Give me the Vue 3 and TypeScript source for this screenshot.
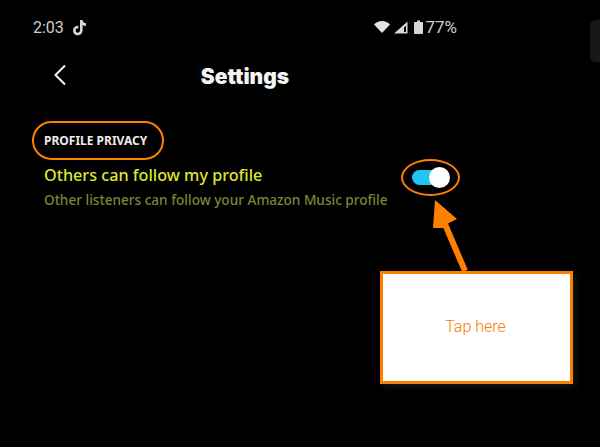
<script setup lang="ts">
const title = 'Settings'
</script>

<template>
  <div class="screen">
    <div class="status">
      <div class="status-left">
        <span>2:03</span>
        <svg class="tiktok" width="15" height="17" viewBox="0 0 15 17">
          <path d="M8 1h2.600c.2 1.900 1.400 3.100 3.400 3.300v2.600c-1.300 0-2.500-.4-3.400-1v5.400c0 3-2.200 5-4.900 5S1 14.300 1 11.500s2.300-5 5.400-4.800v2.700c-1.500-.3-2.800.7-2.800 2.100 0 1.300 1 2.200 2.200 2.200S8 12.800 8 11.300z" fill="#d6d6d6"/>
        </svg>
      </div>
      <div class="status-right">
        <svg width="16" height="12" viewBox="0 0 16 12"><path d="M0 3.500C2 1.300 5 0 8 0s6 1.300 8 3.500L8 12z" fill="#e2e2e2"/></svg>
        <svg class="signal" width="14" height="13" viewBox="0 0 14 13"><path d="M0 12.500 13.500.5v12zM10 6.500v4.500h2V4.800z" fill="#d6d6d6" fill-rule="evenodd"/></svg>
        <svg class="battery" width="9" height="14" viewBox="0 0 9 14"><path d="M1 2h2V.5h3V2h2q1 0 1 1v10q0 1-1 1H1q-1 0-1-1V3q0-1 1-1z" fill="#d6d6d6"/></svg>
        <span class="pct">77%</span>
      </div>
    </div>

    <header class="nav">
      <svg class="back" width="14" height="22" viewBox="0 0 14 22"><path d="M12 1.500 2.500 11l9.500 9.500" fill="none" stroke="#f2f2f2" stroke-width="2"/></svg>
      <h1>{{ title }}</h1>
    </header>

    <section class="privacy">
      <h2>PROFILE PRIVACY</h2>
      <div class="row">
        <div class="labels">
          <div class="name">Others can follow my profile</div>
          <div class="desc">Other listeners can follow your Amazon Music profile</div>
        </div>
        <div class="switch"><span class="knob"></span></div>
      </div>
    </section>

    <!-- overlays: edge tab and annotations drawn over the screenshot -->
    <span class="edge-tab"></span>
    <span class="ring ring-title"></span>
    <span class="ring ring-switch"></span>
    <svg class="arrow" width="60" height="72" viewBox="0 0 60 72">
      <path d="M44 72 23.500 24" fill="none" stroke="#ff8000" stroke-width="6"/>
      <path d="M14 1 36 20 26 25 22 29 12 29z" fill="#ff8000"/>
    </svg>
    <div class="callout">Tap here</div>
  </div>
</template>

<style>
html, body { margin: 0; background: #000; }
</style>

<style scoped>
.screen {
  position: relative;
  width: 600px;
  height: 447px;
  overflow: hidden;
  background: #000;
  font-family: "Noto Sans", sans-serif;
}
.status {
  display: flex;
  justify-content: space-between;
  align-items: center;
  height: 20px;
  padding: 17px 143px 0 33px;
  color: #d0d0d0;
  font-family: Roboto, sans-serif;
  font-size: 16px;
}
.status-left, .status-right { display: flex; align-items: center; }
.tiktok { margin-left: 8px; }
.signal { margin-left: 4px; }
.battery { margin-left: 6px; }
.pct { margin-left: 2px; font-size: 17px; }
.nav {
  position: relative;
  display: flex;
  justify-content: center;
  align-items: center;
  height: 30px;
  margin-top: 24px;
  padding-right: 110px;
}
.back { position: absolute; left: 53px; top: 3px; }
h1 {
  margin: 0;
  color: #f4f4f4;
  font-family: Inter, sans-serif;
  font-size: 21px;
  font-weight: 900;
}
.privacy { padding: 40px 0 0 44px; }
h2 {
  margin: 0;
  height: 20px;
  line-height: 20px;
  color: #ececec;
  font-size: 12px;
  font-weight: 700;
}
.row {
  display: flex;
  align-items: flex-start;
  margin-top: 13px;
}
.labels { width: 368px; }
.name {
  color: #dfe62c;
  font-size: 16.200px;
  line-height: 22px;
  font-weight: 500;
}
.desc {
  margin-top: 5px;
  color: #7f8436;
  font-size: 13.600px;
  line-height: 18px;
  font-weight: 500;
}
.switch {
  position: relative;
  width: 34px;
  height: 15px;
  margin-top: 6px;
  border-radius: 8px;
  background: #22c4f4;
}
.knob {
  position: absolute;
  right: -4px;
  top: -3px;
  width: 21px;
  height: 21px;
  border-radius: 50%;
  background: #fff;
}
.edge-tab {
  position: absolute;
  right: 0;
  top: 20px;
  width: 10px;
  height: 42px;
  border-radius: 6px 0 0 6px;
  background: #181818;
}
.ring {
  position: absolute;
  box-sizing: border-box;
  border: 2px solid #ff8000;
  border-radius: 50%;
}
.ring-title { left: 32px; top: 121px; width: 132px; height: 39px; border-radius: 20px; }
.ring-switch { left: 401px; top: 159px; width: 59px; height: 37px; }
.arrow { position: absolute; left: 421px; top: 199px; }
.callout {
  position: absolute;
  left: 380px;
  top: 271px;
  box-sizing: border-box;
  display: flex;
  align-items: center;
  justify-content: center;
  width: 193px;
  height: 113px;
  padding: 0 2px 2px 0;
  border: 3px solid #ff8000;
  background: #fff;
  color: #f97c00;
  font-family: Roboto, sans-serif;
  font-size: 16px;
  font-weight: 300;
  box-shadow: 3px 3px 6px rgba(60, 60, 60, 0.35);
}
</style>
